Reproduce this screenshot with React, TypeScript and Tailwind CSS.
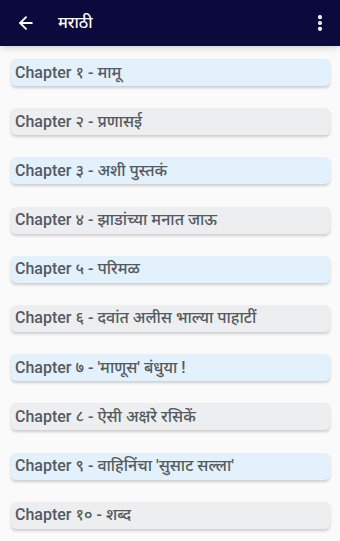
import { ArrowLeft, EllipsisVertical } from "lucide-react";

const chapters = [
    "Chapter १ - मामू",
    "Chapter २ - प्रणासई",
    "Chapter ३ - अशी पुस्तकं",
    "Chapter ४ - झाडांच्या मनात जाऊ",
    "Chapter ५ - परिमळ",
    "Chapter ६ - दवांत अलीस भाल्या पाहाटीं",
    "Chapter ७ - 'माणूस' बंधुया !",
    "Chapter ८ - ऐसी अक्षरे रसिकें",
    "Chapter ९ - वाहिनिंचा 'सुसाट सल्ला'",
    "Chapter १० - शब्द",
];

export default function App() {
    return (
        <div
            className="w-[340px] h-[541px] overflow-hidden bg-[#fafafa]"
            style={{ fontFamily: "Roboto, 'Noto Sans', 'Noto Sans Devanagari', sans-serif" }}
        >
            {/* Toolbar */}
            <div className="h-[46px] bg-[#0c0a3c] flex items-center px-4 text-white shadow-md">
                <ArrowLeft className="w-5 h-5" strokeWidth={2.25} />
                <span className="ml-[22px] text-[16px] font-medium">मराठी</span>
                <EllipsisVertical className="w-5 h-5 ml-auto -mr-[6px]" strokeWidth={3} />
            </div>

            {/* Chapter list */}
            <div className="flex flex-col gap-[22.2px] pl-[11px] pr-[10px] pt-[13px]">
                {chapters.map((c, i) => (
                    <div
                        key={c}
                        className={`h-[27px] flex items-center px-[4px] rounded-[5px] shadow-[0_2px_3px_rgba(0,0,0,0.18)] ${
                            i % 2 === 0 ? "bg-[#e3f1fc]" : "bg-[#eceef0]"
                        }`}
                    >
                        <span className="text-[16px] font-medium text-[#555a60] leading-none whitespace-nowrap">{c}</span>
                    </div>
                ))}
            </div>
        </div>
    );
}
